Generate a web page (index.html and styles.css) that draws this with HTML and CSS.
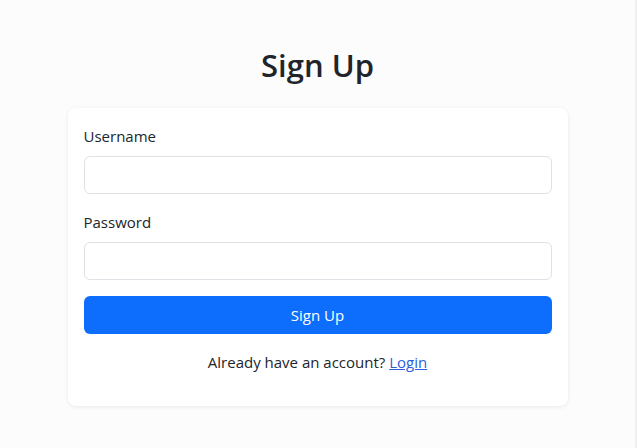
FILE: index.html
```html
<!DOCTYPE html>
<html lang="en">
<head>
<meta charset="utf-8">
<title>Sign Up</title>
<link rel="stylesheet" href="styles.css">
</head>
<body>
<main class="page">
  <h2 class="title">Sign Up</h2>
  <form class="card">
    <div class="field">
      <label class="label" for="username">Username</label>
      <input class="input" id="username" type="text">
    </div>
    <div class="field">
      <label class="label" for="password">Password</label>
      <input class="input" id="password" type="password">
    </div>
    <button class="btn" type="button">Sign Up</button>
    <p class="alt">Already have an account? <a href="#" class="link">Login</a></p>
  </form>
</main>
</body>
</html>
```
FILE: styles.css
```css
html, body {
  margin: 0;
  height: 100%;
}
body {
  background: #fcfcfc;
  font-family: "Open Sans", "Noto Sans", sans-serif;
  font-size: 15px;
  line-height: 24px;
  color: #212529;
  border-right: 2px solid #f0f0f0;
  box-sizing: border-box;
}
.page {
  width: 500px;
  margin: 0 auto;
  padding-top: 46px;
  display: flex;
  flex-direction: column;
}
.title {
  margin: 0 0 24px;
  font-size: 31px;
  font-weight: 600;
  line-height: 38px;
  text-align: center;
}
.card {
  background: #fff;
  border-radius: 8px;
  box-shadow: 0 1px 4px rgba(0, 0, 0, 0.08);
  padding: 16px;
  display: flex;
  flex-direction: column;
}
.field {
  display: flex;
  flex-direction: column;
  margin-bottom: 16px;
}
.label {
  margin-bottom: 8px;
}
.input {
  height: 38px;
  box-sizing: border-box;
  border: 1px solid #dee2e6;
  border-radius: 6px;
  background: #fff;
  font: inherit;
  padding: 6px 12px;
}
.btn {
  height: 38px;
  border: none;
  border-radius: 6px;
  background: #0d6efd;
  color: #fff;
  font: inherit;
}
.alt {
  margin: 16px 0 16px;
  text-align: center;
}
.link {
  color: #2b5fd9;
}
```
